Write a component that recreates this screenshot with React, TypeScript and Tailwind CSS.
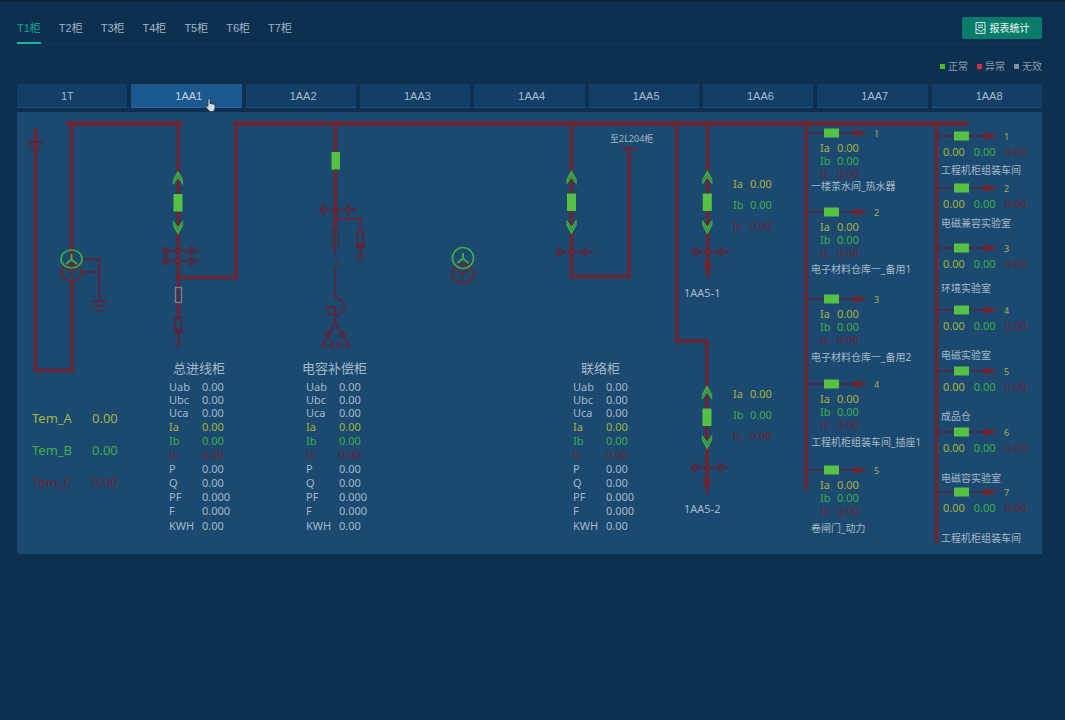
import { useState } from "react";
import clsx from "clsx";

const CABINETS = ["T1柜", "T2柜", "T3柜", "T4柜", "T5柜", "T6柜", "T7柜"];
const UNITS = ["1T", "1AA1", "1AA2", "1AA3", "1AA4", "1AA5", "1AA6", "1AA7", "1AA8"];

const LEGEND = [
  { label: "正常", color: "bg-[#4fb82c]" },
  { label: "异常", color: "bg-[#d8303c]" },
  { label: "无效", color: "bg-[#7d90a3]" },
];

type Tone = "plain" | "a" | "b" | "c";

const TONES: Record<Tone, string> = {
  plain: "text-[#a3b9ca]",
  a: "text-[#a5b445]",
  b: "text-[#3fae49]",
  c: "text-[#6d2439]",
};

type Row = { name: string; value: string; tone: Tone };

const PHASES: Row[] = [
  { name: "Ia", value: "0.00", tone: "a" },
  { name: "Ib", value: "0.00", tone: "b" },
  { name: "Ic", value: "0.00", tone: "c" },
];

const VOLTAGES: Row[] = [
  { name: "Uab", value: "0.00", tone: "plain" },
  { name: "Ubc", value: "0.00", tone: "plain" },
  { name: "Uca", value: "0.00", tone: "plain" },
];

const POWER: Row[] = [
  { name: "P", value: "0.00", tone: "plain" },
  { name: "Q", value: "0.00", tone: "plain" },
  { name: "PF", value: "0.000", tone: "plain" },
  { name: "F", value: "0.000", tone: "plain" },
];

const ENERGY: Row[] = [{ name: "KWH", value: "0.00", tone: "plain" }];

const TEMPERATURES: Row[] = [
  { name: "Tem_A", value: "0.00", tone: "a" },
  { name: "Tem_B", value: "0.00", tone: "b" },
  { name: "Tem_C", value: "0.00", tone: "c" },
];

// y: branch line on the drawing, gap: space above the caption
type FeederInfo = { no: number; y: number; gap: number; name: string };

const LEFT_FEEDERS: FeederInfo[] = [
  { no: 1, y: 21, gap: 0, name: "一楼茶水间_热水器" },
  { no: 2, y: 100, gap: 4, name: "电子材料仓库一_备用1" },
  { no: 3, y: 187, gap: 5, name: "电子材料仓库一_备用2" },
  { no: 4, y: 272, gap: 5, name: "工程机柜组装车间_插座1" },
  { no: 5, y: 358, gap: 5, name: "卷闸门_动力" },
];

const RIGHT_FEEDERS: FeederInfo[] = [
  { no: 1, y: 24, gap: 4, name: "工程机柜组装车间" },
  { no: 2, y: 76, gap: 5, name: "电磁兼容实验室" },
  { no: 3, y: 136, gap: 10, name: "环境实验室" },
  { no: 4, y: 198, gap: 15, name: "电磁实验室" },
  { no: 5, y: 259, gap: 15, name: "成品仓" },
  { no: 6, y: 320, gap: 16, name: "电磁容实验室" },
  { no: 7, y: 380, gap: 16, name: "工程机柜组装车间" },
];

const RED = "#6d2531";
const DIM_RED = "#5f2439";
const GREEN = "#55c246";
const DIM_GREEN = "#3fab46";

function Rows({ rows, height, labelWidth }: { rows: Row[]; height: string; labelWidth: string }) {
  return (
    <tbody>
      {rows.map((row) => (
        <tr key={row.name} className={clsx(height, TONES[row.tone])}>
          <th scope="row" className={clsx("p-0 text-left font-normal", labelWidth)}>
            {row.name}
          </th>
          <td className="p-0">{row.value}</td>
        </tr>
      ))}
    </tbody>
  );
}

function CabinetReadings({ title, indent }: { title: string; indent: string }) {
  return (
    <div className="whitespace-nowrap">
      <h2 className={clsx("h-6 text-[13px] leading-6", indent)}>{title}</h2>
      <table aria-label={title} className="border-collapse text-[11px] leading-none">
        <Rows rows={VOLTAGES} height="h-[13px]" labelWidth="w-[33px]" />
        <Rows rows={PHASES} height="h-[14px]" labelWidth="w-[33px]" />
        <Rows rows={POWER} height="h-[14px]" labelWidth="w-[33px]" />
        <Rows rows={ENERGY} height="h-[16px]" labelWidth="w-[33px]" />
      </table>
    </div>
  );
}

function OutletReadings({ name, gap }: { name: string; gap: string }) {
  return (
    <div className={clsx("flex flex-col items-start", gap)}>
      <table aria-label={name} className="ml-[49px] border-collapse leading-none">
        <Rows rows={PHASES} height="h-[21px]" labelWidth="w-[17px]" />
      </table>
      <p className="h-4 leading-4">{name}</p>
    </div>
  );
}

function FeederList({
  feeders,
  className,
  children,
}: {
  feeders: FeederInfo[];
  className: string;
  children: React.ReactNode;
}) {
  return (
    <ul className={clsx("whitespace-nowrap", className)}>
      {feeders.map((f, i) => {
        const next = feeders[i + 1];
        return (
          <li key={f.no} style={{ height: next ? next.y - f.y : undefined }}>
            <p className="h-[15px] pl-[63px] text-[9px] leading-4 text-[#a5b445]">{f.no}</p>
            {children}
            <p className="text-[10px] leading-3" style={{ paddingTop: f.gap }}>
              {f.name}
            </p>
          </li>
        );
      })}
    </ul>
  );
}

// Withdrawable breaker: plug arrows above and below the green body
function Breaker({ x, y }: { x: number; y: number }) {
  return (
    <g transform={`translate(${x} ${y})`}>
      <g fill={DIM_GREEN}>
        <path d="M0 -32.5 L5.2 -23 V-17.5 L0 -24.5 L-5.2 -17.5 V-23 Z" />
        <path d="M0 32 L5.2 22.5 V17 L0 24 L-5.2 17 V22.5 Z" />
      </g>
      <path
        d="M-4.5 -21 L0 -27.5 L4.5 -21 M-4.5 20.5 L0 27 L4.5 20.5"
        fill="none"
        stroke="#31754c"
        strokeWidth="0.8"
      />
      <rect x="-4.5" y="-9" width="9" height="17.5" fill={GREEN} />
    </g>
  );
}

// Three current transformers in a row
function CurrentTransformers({ x, y }: { x: number; y: number }) {
  return (
    <g transform={`translate(${x} ${y})`} fill="none" stroke={DIM_RED} strokeWidth="1.3">
      <circle cx="-12.5" cy="0" r="2.8" />
      <circle cx="0" cy="0" r="2.8" />
      <circle cx="13" cy="0" r="2.8" />
      <path d="M-12.5 -6 V6 M13 -6 V6" />
      <path d="M-16 0 H-13 M-10 1 l2 -2 l1 2 l3 -3 M3 1 l3 -2 l1 2 l3 -2 M16 1 l2 -2 l1 2 l3 -3" />
    </g>
  );
}

function Ground({ x, y, w }: { x: number; y: number; w: number }) {
  return (
    <path
      d={`M${x - w} ${y} h${w * 2} M${x - w * 0.7} ${y + w * 0.65} h${w * 1.4} M${x - w * 0.4} ${y + w * 1.3} h${w * 0.8}`}
      stroke={DIM_RED}
      strokeWidth={w > 5 ? 1.8 : 1.2}
    />
  );
}

function Arrester({ x, y }: { x: number; y: number }) {
  return (
    <g transform={`translate(${x} ${y})`} stroke={DIM_RED}>
      <rect x="-3" y="0" width="6" height="15" fill="#1b496f" strokeWidth="1.8" />
      <path d="M-3 12 H3 L0 18 Z" fill="#66202e" />
      <path d="M0 16 V24" strokeWidth="2" />
      <Ground x={0} y={24} w={4.5} />
    </g>
  );
}

function Transformer({ x, y, gap, ry }: { x: number; y: number; gap: number; ry: number }) {
  return (
    <g transform={`translate(${x} ${y})`} fill="none" strokeWidth="1.7">
      <ellipse cx="0" cy={gap} rx="10.5" ry={ry} stroke={RED} />
      <path
        d={`M-5 ${gap - 4} L0 ${gap + 1} L5 ${gap - 4} M0 ${gap + 1} V${gap + 5} M-5 ${gap - 4} Q0 ${gap - 10} 5 ${gap - 4}`}
        stroke={RED}
      />
      <ellipse cx="0" cy="0" rx="10.5" ry={ry + 0.5} stroke={DIM_GREEN} />
      <path d="M0 -5 V1 M-5.5 5 L0 0.5 L5.5 5" stroke={DIM_GREEN} strokeWidth="2" />
    </g>
  );
}

function DownArrow({ x, y }: { x: number; y: number }) {
  return <path d={`M${x - 4.5} ${y} l4.5 2 l4.5 -2 l-3 11 v5 h-3 v-5 Z`} fill={RED} />;
}

function FeederBranch({ x, y }: { x: number; y: number }) {
  const left = x + 17;
  return (
    <g>
      <path d={`M${x} ${y} H${left + 32}`} stroke={DIM_RED} strokeWidth="1.5" />
      <rect x={left} y={y - 4.5} width="15" height="9" fill={GREEN} />
      <path d={`M${left + 30} ${y - 3.5} L${left + 44} ${y} L${left + 30} ${y + 3.5} Z`} fill="#7a2029" />
    </g>
  );
}

function Wiring() {
  return (
    <svg width="1025" height="442" viewBox="0 0 1025 442" className="block" aria-hidden="true">
      {/* bus bars */}
      <path d="M49 11.5 H166 M216 11.5 H951" stroke={RED} strokeWidth="4.5" />
      <g fill="none" stroke={RED} strokeWidth="3.5">
        <path d="M18.5 16 V258.5 H55 V168" />
        <path d="M54.5 12 V148" />
        <path d="M161.3 12 V165.5 H219 V12" />
        <path d="M161.3 165 V206" />
        <path d="M318.5 12 V117" />
        <path d="M554.5 12 V164.5 H612 V37" />
        <path d="M659.7 12 V229 H690 V368" />
        <path d="M690.7 12 V152" />
        <path d="M789.3 12 V378" />
        <path d="M919.7 12 V431" />
      </g>
      <path d="M605 36.5 H620" stroke={RED} strokeWidth="2" />

      {/* incoming line and main transformer */}
      <path d="M11 30 H25 L18.5 42 Z" fill="none" stroke={DIM_RED} strokeWidth="1.3" />
      <path d="M65 147.5 H82.5 V189 M65 160 H82.5" fill="none" stroke={DIM_RED} strokeWidth="1.8" />
      <Ground x={82.5} y={189} w={7.5} />
      <Transformer x={54.5} y={147} gap={13} ry={8.5} />

      {/* incoming cabinet */}
      <Breaker x={161} y={91} />
      <CurrentTransformers x={161.3} y={139} />
      <CurrentTransformers x={161.3} y={149} />
      <path d="M148.8 139 V149 M174.3 139 V149" stroke={DIM_RED} />
      <rect x="158.5" y="175.5" width="6" height="15" fill="#4a3047" stroke="#73849a" strokeWidth="1.3" />
      <Arrester x={161.3} y={205.5} />

      {/* capacitor cabinet */}
      <rect x="314.5" y="40" width="8.5" height="17.5" fill={GREEN} />
      <CurrentTransformers x={318.5} y={98} />
      <path d="M318.5 107 H343.5 V120" fill="none" stroke={RED} strokeWidth="1.8" />
      <Arrester x={343.5} y={120} />
      <g fill="none" stroke={DIM_RED} strokeWidth="1.8">
        <rect x="315.5" y="117.5" width="5.5" height="18.5" strokeWidth="1.2" />
        <path d="M318.3 117 V145" strokeWidth="1.2" />
        <path d="M318.3 147 L323 155" strokeWidth="1.2" />
        <path d="M318.3 155 V186 C330 187 330 203 318 203.5 C312 203 309 199 309.7 195 H318.3 V212" />
        <path d="M318.3 211 L305 233.7 H315.5 M318.3 211 L332 233.7 H321.5" />
        <path d="M315.5 230 V237.5 M321 230 V237.5" />
        <path d="M307.5 222 L313.5 226 M309.5 219 L315.5 223 M329 222 L323 226 M327 219 L321 223" />
      </g>

      <Transformer x={446} y={146} gap={15.5} ry={10} />

      {/* tie cabinet and 1AA5 outlets */}
      <Breaker x={554.5} y={90.5} />
      <CurrentTransformers x={554.7} y={140} />
      <Breaker x={690.3} y={90.5} />
      <CurrentTransformers x={690.7} y={140} />
      <DownArrow x={690.7} y={150} />
      <Breaker x={690} y={305.5} />
      <CurrentTransformers x={690} y={355.5} />
      <DownArrow x={690} y={366} />

      {LEFT_FEEDERS.map((f) => (
        <FeederBranch key={f.no} x={790} y={f.y} />
      ))}
      {RIGHT_FEEDERS.map((f) => (
        <FeederBranch key={f.no} x={920} y={f.y} />
      ))}
    </svg>
  );
}

function Diagram() {
  return (
    <section
      aria-label="一次接线图"
      className="relative mt-1 overflow-x-auto bg-[#1b496f] font-['Noto_Sans','Noto_Sans_CJK_SC',sans-serif] text-[11px] text-[#a3b9ca]"
    >
      <Wiring />

      {/* readings lie over the wiring, one column per cabinet */}
      <div className="absolute inset-0 grid grid-cols-[152px_137px_267px_111px_127px_130px_1fr]">
        <div className="pl-[15px] pt-[290px]">
          <table aria-label="温度" className="border-collapse text-[13px] leading-none">
            <Rows rows={TEMPERATURES} height="h-8" labelWidth="w-[60px]" />
          </table>
        </div>

        <div className="pt-[244px]">
          <CabinetReadings title="总进线柜" indent="pl-1" />
        </div>

        <div className="pt-[244px]">
          <CabinetReadings title="电容补偿柜" indent="-ml-1" />
        </div>

        <div className="flex flex-col gap-[209px] pt-[19px]">
          <p className="h-4 pl-[37px] text-[9px] leading-4">至2L204柜</p>
          <CabinetReadings title="联络柜" indent="pl-2" />
        </div>

        <div className="flex flex-col gap-[82px] pt-[61px]">
          <OutletReadings name="1AA5-1" gap="gap-[49px]" />
          <OutletReadings name="1AA5-2" gap="gap-[55px]" />
        </div>

        <FeederList feeders={LEFT_FEEDERS} className="pt-[14px]">
          <table className="ml-[9px] border-collapse leading-none">
            <Rows rows={PHASES} height="h-[13px]" labelWidth="w-[17px]" />
          </table>
        </FeederList>

        <FeederList feeders={RIGHT_FEEDERS} className="pt-[17px]">
          <p className="flex gap-[9px] pl-[2px] leading-4">
            {PHASES.map((p) => (
              <span key={p.name} className={TONES[p.tone]}>
                {p.value}
              </span>
            ))}
          </p>
        </FeederList>
      </div>
    </section>
  );
}

function ReportIcon() {
  return (
    <svg width="11" height="12" viewBox="0 0 11 12" fill="none" stroke="currentColor" aria-hidden="true">
      <path d="M1 0.6 H10 V8 M1 0.6 V11.4 H10 V8" />
      <path d="M3 3.2 H8 M3 5.4 H8" />
      <path d="M1 7.5 H3.2 Q3.8 9.4 5.5 9.4 Q7.2 9.4 7.8 7.5 H10" />
    </svg>
  );
}

function HandPointer() {
  return (
    <svg
      width="11"
      height="15"
      viewBox="0 0 11 15"
      className="pointer-events-none absolute left-[74px] top-[14px] z-10"
      aria-hidden="true"
    >
      <path
        d="M3 1.8 Q3 0.7 4 0.7 Q5 0.7 5 1.8 V5.4 L8.8 6.2 Q10 6.5 10 7.8 V10 Q10 11.4 9 12.4 V13.6 H4 V12.6 Q2 10.8 0.9 8.8 Q0.6 7.6 1.7 7.5 L3 8.6 Z"
        fill="#d3dbe2"
        stroke="#26323d"
        strokeWidth="0.8"
      />
    </svg>
  );
}

export default function App() {
  const [cabinet, setCabinet] = useState("T1柜");
  const [unit, setUnit] = useState("1AA1");

  return (
    <main className="min-h-screen border-t-2 border-[#0b2239] bg-[#0d3051] pl-[17px] pr-[23px] font-['Liberation_Sans','Noto_Sans_CJK_SC',sans-serif]">
      <header className="flex h-[42px] justify-between border-b border-[#10375f]">
        <nav className="-mb-px flex gap-[18px]">
          {CABINETS.map((name) => (
            <button
              key={name}
              onClick={() => setCabinet(name)}
              className={clsx(
                "border-b-2 pt-3 text-[11px]",
                name === cabinet ? "border-[#1cb5a5] text-[#16a596]" : "border-transparent text-[#a3b3c2]"
              )}
            >
              {name}
            </button>
          ))}
        </nav>
        <button className="mt-[15px] flex h-[22px] w-20 items-center justify-center gap-1 rounded-xs bg-[#087c6b] text-[10px] font-medium text-[#d8ebe8]">
          <ReportIcon />
          报表统计
        </button>
      </header>

      <ul className="flex h-10 items-center justify-end gap-[9px] pt-1 text-[10px] text-[#8799aa]">
        {LEGEND.map((item) => (
          <li key={item.label} className="flex items-center gap-[3px]">
            <span className={clsx("size-[5px]", item.color)} />
            {item.label}
          </li>
        ))}
      </ul>

      <div className="grid grid-cols-9 gap-1">
        {UNITS.map((name) => (
          <div key={name} className="relative flex">
            <button
              onClick={() => setUnit(name)}
              className={clsx(
                "h-6 w-full border-b pl-11 pt-px text-left text-[11px]",
                name === unit
                  ? "border-[#2263a0] bg-[#1c5890] text-[#c3d3e1]"
                  : "border-[#1d4d7b] bg-[#133e67] text-[#a9bac9]"
              )}
            >
              {name}
            </button>
            {name === "1AA1" && <HandPointer />}
          </div>
        ))}
      </div>

      <Diagram />
    </main>
  );
}
